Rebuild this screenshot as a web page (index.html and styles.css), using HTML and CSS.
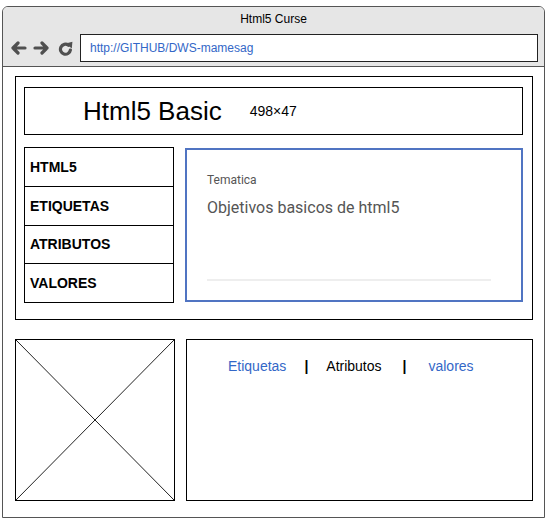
FILE: index.html
```html
<!DOCTYPE html>
<html lang="es">
<head>
  <meta charset="UTF-8" />
  <meta name="viewport" content="width=device-width, initial-scale=1.0"/>
  <title>Html5 Curse</title>
  <link rel="stylesheet" href="styles.css">
</head>
<body>

  <div class="window">
    <div class="window-bar">
      <div class="window-title">Html5 Curse</div>
      <div class="nav-row">
        <svg class="icon icon-back" width="17" height="14" viewBox="0 0 17 14">
          <path d="M15 7 H3 M8 2 L3 7 L8 12" fill="none" stroke="#505050" stroke-width="3.2" stroke-linecap="round" stroke-linejoin="round"/>
        </svg>
        <svg class="icon icon-fwd" width="17" height="14" viewBox="0 0 17 14">
          <path d="M2 7 H14 M9 2 L14 7 L9 12" fill="none" stroke="#505050" stroke-width="3.2" stroke-linecap="round" stroke-linejoin="round"/>
        </svg>
        <svg class="icon icon-reload" width="15" height="15" viewBox="0 0 15 15">
          <path d="M12.4 9 A5 5 0 1 1 10.4 4.2" fill="none" stroke="#505050" stroke-width="3.2" stroke-linecap="round"/>
          <polygon points="7.6,2.6 14.4,0.8 13.8,7.6" fill="#505050"/>
        </svg>
        <div class="address">http://GITHUB/DWS-mamesag</div>
      </div>
    </div>

    <div class="window-body">
      <section class="panel">
        <header class="page-head">
          <h1>Html5 Basic</h1>
          <span class="size">498×47</span>
        </header>
        <div class="panel-grid">
          <ul class="menu">
            <li>HTML5</li>
            <li>ETIQUETAS</li>
            <li>ATRIBUTOS</li>
            <li>VALORES</li>
          </ul>
          <div class="card">
            <div class="card-label">Tematica</div>
            <div class="card-text">Objetivos basicos de html5</div>
            <div class="card-rule"></div>
          </div>
        </div>
      </section>

      <div class="bottom-row">
        <div class="placeholder">
          <svg width="100%" height="100%" viewBox="0 0 158 160" preserveAspectRatio="none">
            <line x1="0" y1="0" x2="158" y2="160" stroke="#222" stroke-width="1"/>
            <line x1="158" y1="0" x2="0" y2="160" stroke="#222" stroke-width="1"/>
          </svg>
        </div>
        <div class="links">
          <a class="link">Etiquetas</a>
          <span class="sep">|</span>
          <span class="link-plain">Atributos</span>
          <span class="sep sep-wide">|</span>
          <a class="link link-last">valores</a>
        </div>
      </div>
    </div>
  </div>

</body>
</html>
```

FILE: styles.css
```css
body {
  margin: 0;
  padding: 0;
  background-color: #ffffff;
  font-family: "Liberation Sans", Arial, sans-serif;
}

.window {
  box-sizing: border-box;
  width: 543px;
  height: 512px;
  margin: 6px 0 0 2px;
  border: 1px solid #555;
  border-radius: 6px 6px 0 0;
  overflow: hidden;
}

.window-bar {
  box-sizing: border-box;
  height: 60px;
  background-color: #e6e6e6;
  border-bottom: 1px solid #555;
}

.window-title {
  padding-top: 5px;
  font-size: 12px;
  line-height: 14px;
  text-align: center;
  color: #000;
}

.nav-row {
  display: flex;
  align-items: center;
  margin-top: 8px;
  padding: 0 6px 0 7px;
}

.icon {
  flex-shrink: 0;
}

.icon-fwd {
  margin-left: 6px;
}

.icon-reload {
  margin-left: 8px;
}

.address {
  box-sizing: border-box;
  flex: 1;
  height: 28px;
  margin-left: 7px;
  padding-left: 9px;
  border: 1px solid #222;
  background-color: #fff;
  font-size: 12px;
  line-height: 26px;
  color: #3367c7;
}

.window-body {
  padding: 9px 11px 0 12px;
}

.panel {
  box-sizing: border-box;
  height: 244px;
  padding: 10px 9px 16px 8px;
  border: 1px solid #000;
}

.page-head {
  box-sizing: border-box;
  display: flex;
  align-items: center;
  height: 48px;
  border: 1px solid #000;
}

.page-head h1 {
  margin: 0 0 0 58px;
  font-size: 26px;
  font-weight: normal;
  line-height: 30px;
}

.size {
  margin-left: 28px;
  font-size: 14px;
}

.panel-grid {
  display: grid;
  grid-template-columns: 150px 338px;
  column-gap: 11px;
  margin-top: 12px;
}

.menu {
  box-sizing: border-box;
  display: flex;
  flex-direction: column;
  height: 156px;
  margin: 0;
  padding: 0;
  list-style: none;
  border: 1px solid #000;
}

.menu li {
  flex: 1;
  display: flex;
  align-items: center;
  padding-left: 5px;
  font-size: 14px;
  font-weight: bold;
}

.menu li + li {
  border-top: 1px solid #000;
}

.card {
  box-sizing: border-box;
  height: 154px;
  margin-top: 1px;
  padding: 23px 20px 0 20px;
  border: 2px solid #5074c2;
  font-family: Roboto, "Liberation Sans", sans-serif;
  color: #555;
}

.card-label {
  font-size: 12px;
  line-height: 14px;
}

.card-text {
  margin-top: 11px;
  font-size: 16px;
  line-height: 20px;
}

.card-rule {
  width: 284px;
  height: 2px;
  margin-top: 61px;
  background-color: #eeeeee;
}

.bottom-row {
  display: grid;
  grid-template-columns: 160px 347px;
  column-gap: 11px;
  margin-top: 19px;
}

.placeholder {
  box-sizing: border-box;
  height: 162px;
  border: 1px solid #000;
}

.placeholder svg {
  display: block;
}

.links {
  box-sizing: border-box;
  display: flex;
  align-items: flex-start;
  height: 162px;
  padding: 18px 0 0 41px;
  border: 1px solid #000;
  font-size: 14px;
  line-height: 16px;
}

.link {
  color: #3367c7;
}

.link-plain {
  color: #000;
}

.sep {
  margin: 0 18px;
  font-weight: bold;
}

.sep-wide {
  margin: 0 22px 0 21px;
}
```
